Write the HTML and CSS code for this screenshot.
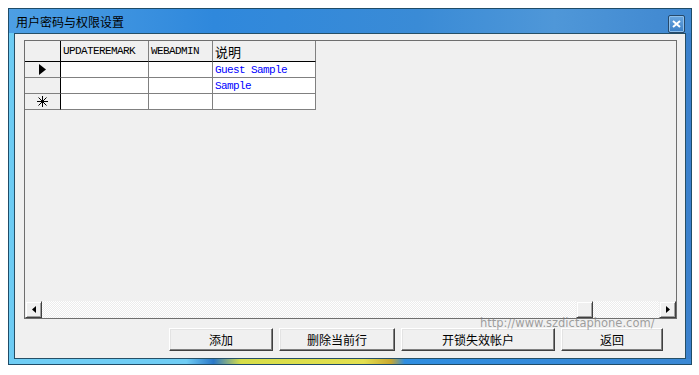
FILE: index.html
```html
<!DOCTYPE html>
<html lang="zh-CN">
<head>
  <meta charset="UTF-8">
  <title>用户密码与权限设置</title>
  <link rel="stylesheet" href="styles.css">
</head>
<body>
  <div class="window">
    <div class="titlebar">
      <span class="title">用户密码与权限设置</span>
      <span class="close-btn">
        <svg width="9" height="8" viewBox="0 0 9 8"><path d="M1 1L8 7M8 1L1 7" stroke="#fff" stroke-width="2"/></svg>
      </span>
    </div>
    <div class="client">
      <div class="datagrid">
        <div class="grid-table">
          <div class="cell head rowhead"></div>
          <div class="cell head mono">UPDATEREMARK</div>
          <div class="cell head mono">WEBADMIN</div>
          <div class="cell head cjk">说明</div>

          <div class="cell rowhead">
            <svg width="7" height="11" viewBox="0 0 7 11"><path d="M0 0L7 5.5L0 11Z" fill="#000"/></svg>
          </div>
          <div class="cell data"></div>
          <div class="cell data"></div>
          <div class="cell data mono blue">Guest Sample</div>

          <div class="cell rowhead"></div>
          <div class="cell data"></div>
          <div class="cell data"></div>
          <div class="cell data mono blue">Sample</div>

          <div class="cell rowhead">
            <svg width="11" height="11" viewBox="0 0 11 11"><path d="M5.5 0V11M0 5.5H11M1.5 1.5L9.5 9.5M9.5 1.5L1.5 9.5" stroke="#000" stroke-width="1"/></svg>
          </div>
          <div class="cell data"></div>
          <div class="cell data"></div>
          <div class="cell data"></div>
        </div>
        <div class="grid-space"></div>
        <div class="hscroll">
          <span class="sb-btn">
            <svg width="4" height="7" viewBox="0 0 4 7"><path d="M4 0L0 3.5L4 7Z" fill="#000"/></svg>
          </span>
          <div class="sb-track">
            <span class="sb-thumb"></span>
          </div>
          <span class="sb-btn">
            <svg width="4" height="7" viewBox="0 0 4 7"><path d="M0 0L4 3.5L0 7Z" fill="#000"/></svg>
          </span>
        </div>
      </div>
      <div class="buttons">
        <button class="btn btn-add">添加</button>
        <button class="btn btn-del">删除当前行</button>
        <button class="btn btn-unlock">开锁失效帐户</button>
        <button class="btn btn-back">返回</button>
      </div>
      <span class="watermark">http://www.szdictaphone.com/</span>
    </div>
  </div>
</body>
</html>
```

FILE: styles.css
```css
body {
  margin: 0;
  background-color: #ffffff;
  font-family: "Noto Sans CJK SC", sans-serif;
  font-size: 12px;
}

.window {
  margin: 8px 0 0 8px;
  width: 684px;
  height: 357px;
  box-sizing: border-box;
  border: 1px solid #1f4c68;
  padding: 0 5px 5px 5px;
  display: flex;
  flex-direction: column;
  background:
    linear-gradient(90deg, #6fcdf4 0%, #6fcdf4 26%, #2a78c8 30%, #d6de48 34%, #e2e050 52%, #c8a830 56%, #2f8ee0 58%, #3a88d4 100%) bottom / 100% 5px no-repeat,
    linear-gradient(90deg, #6fcdf4 0%, #4aa6e6 8%, #2f86d8 40%, #3b87d4 70%, #4b95da 85%, #3a80cc 100%);
}

.titlebar {
  height: 24px;
  display: flex;
  align-items: center;
  justify-content: space-between;
  background: linear-gradient(90deg, #4d9fe4 0%, #2f88dc 30%, #3a8bd6 60%, #4f97d8 80%, #3f87d0 100%);
  margin: 0 -5px;
  padding: 0 6px 0 7px;
}

.title {
  color: #000;
  font-size: 12px;
  line-height: 12px;
  margin-top: 1px;
}

.close-btn {
  width: 17px;
  height: 18px;
  box-sizing: border-box;
  border: 1px solid #27496a;
  border-radius: 2px;
  background: linear-gradient(#6aa7e0, #3b7fc6);
  box-shadow: inset 0 0 0 1px #8ec0ec;
  display: flex;
  align-items: center;
  justify-content: center;
  margin-top: 5px;
}

.client {
  flex: 1;
  position: relative;
  background-color: #f0f0f0;
  border: 1px solid #264f66;
  display: flex;
  flex-direction: column;
  padding: 6px 8px 6px 9px;
}

.datagrid {
  height: 279px;
  box-sizing: border-box;
  border: 1px solid #6e6e6e;
  background-color: #f0f0f0;
  display: flex;
  flex-direction: column;
}

.grid-table {
  display: grid;
  grid-template-columns: 36px 88px 64px 103px;
  grid-template-rows: 21px 16px 16px 16px;
}

.cell {
  box-sizing: border-box;
  border-right: 1px solid #808080;
  border-bottom: 1px solid #808080;
  padding-left: 2px;
  display: flex;
  align-items: center;
  white-space: nowrap;
  overflow: hidden;
}

.head {
  background-color: #f0f0f0;
  border-bottom-color: #000;
}

.rowhead {
  background-color: #f0f0f0;
  border-right-color: #000;
  justify-content: center;
  padding-left: 0;
}

.data {
  background-color: #ffffff;
}

.mono {
  font-family: "Liberation Mono", monospace;
  font-size: 11px;
  letter-spacing: -0.6px;
}

.cjk {
  font-size: 13px;
}

.blue {
  color: #0000ff;
}

.grid-space {
  flex: 1;
}

.hscroll {
  height: 17px;
  display: flex;
}

.sb-btn {
  width: 17px;
  height: 17px;
  box-sizing: border-box;
  background-color: #f0f0f0;
  border: 1px solid;
  border-color: #f0f0f0 #404040 #404040 #f0f0f0;
  box-shadow: inset 1px 1px #ffffff, inset -1px -1px #a0a0a0;
  display: flex;
  align-items: center;
  justify-content: center;
}

.sb-track {
  flex: 1;
  display: flex;
  background-color: #f8f8f8;
  background-image: repeating-conic-gradient(#ffffff 0 25%, #ececec 0 50%);
  background-size: 2px 2px;
}

.sb-thumb {
  width: 17px;
  margin-left: auto;
  margin-right: 66px;
  box-sizing: border-box;
  background-color: #f0f0f0;
  border: 1px solid;
  border-color: #f0f0f0 #404040 #404040 #f0f0f0;
  box-shadow: inset 1px 1px #ffffff, inset -1px -1px #a0a0a0;
}

.buttons {
  display: flex;
  justify-content: flex-end;
  gap: 6px;
  margin-top: 9px;
  padding-right: 14px;
}

.btn {
  height: 23px;
  box-sizing: border-box;
  background-color: #f0f0f0;
  border: 1px solid;
  border-color: #ffffff #404040 #404040 #ffffff;
  box-shadow: inset -1px -1px #808080, inset 1px 1px #e3e3e3;
  font-family: "Noto Sans CJK SC", sans-serif;
  font-size: 12px;
  color: #000;
  padding: 0;
}

.btn-add { width: 104px; }
.btn-del { width: 116px; }
.btn-unlock { width: 154px; }
.btn-back { width: 102px; }

.watermark {
  position: absolute;
  left: 465px;
  top: 282px;
  font-family: "DejaVu Sans", sans-serif;
  font-size: 11.5px;
  color: rgba(120, 120, 120, 0.7);
}
```
